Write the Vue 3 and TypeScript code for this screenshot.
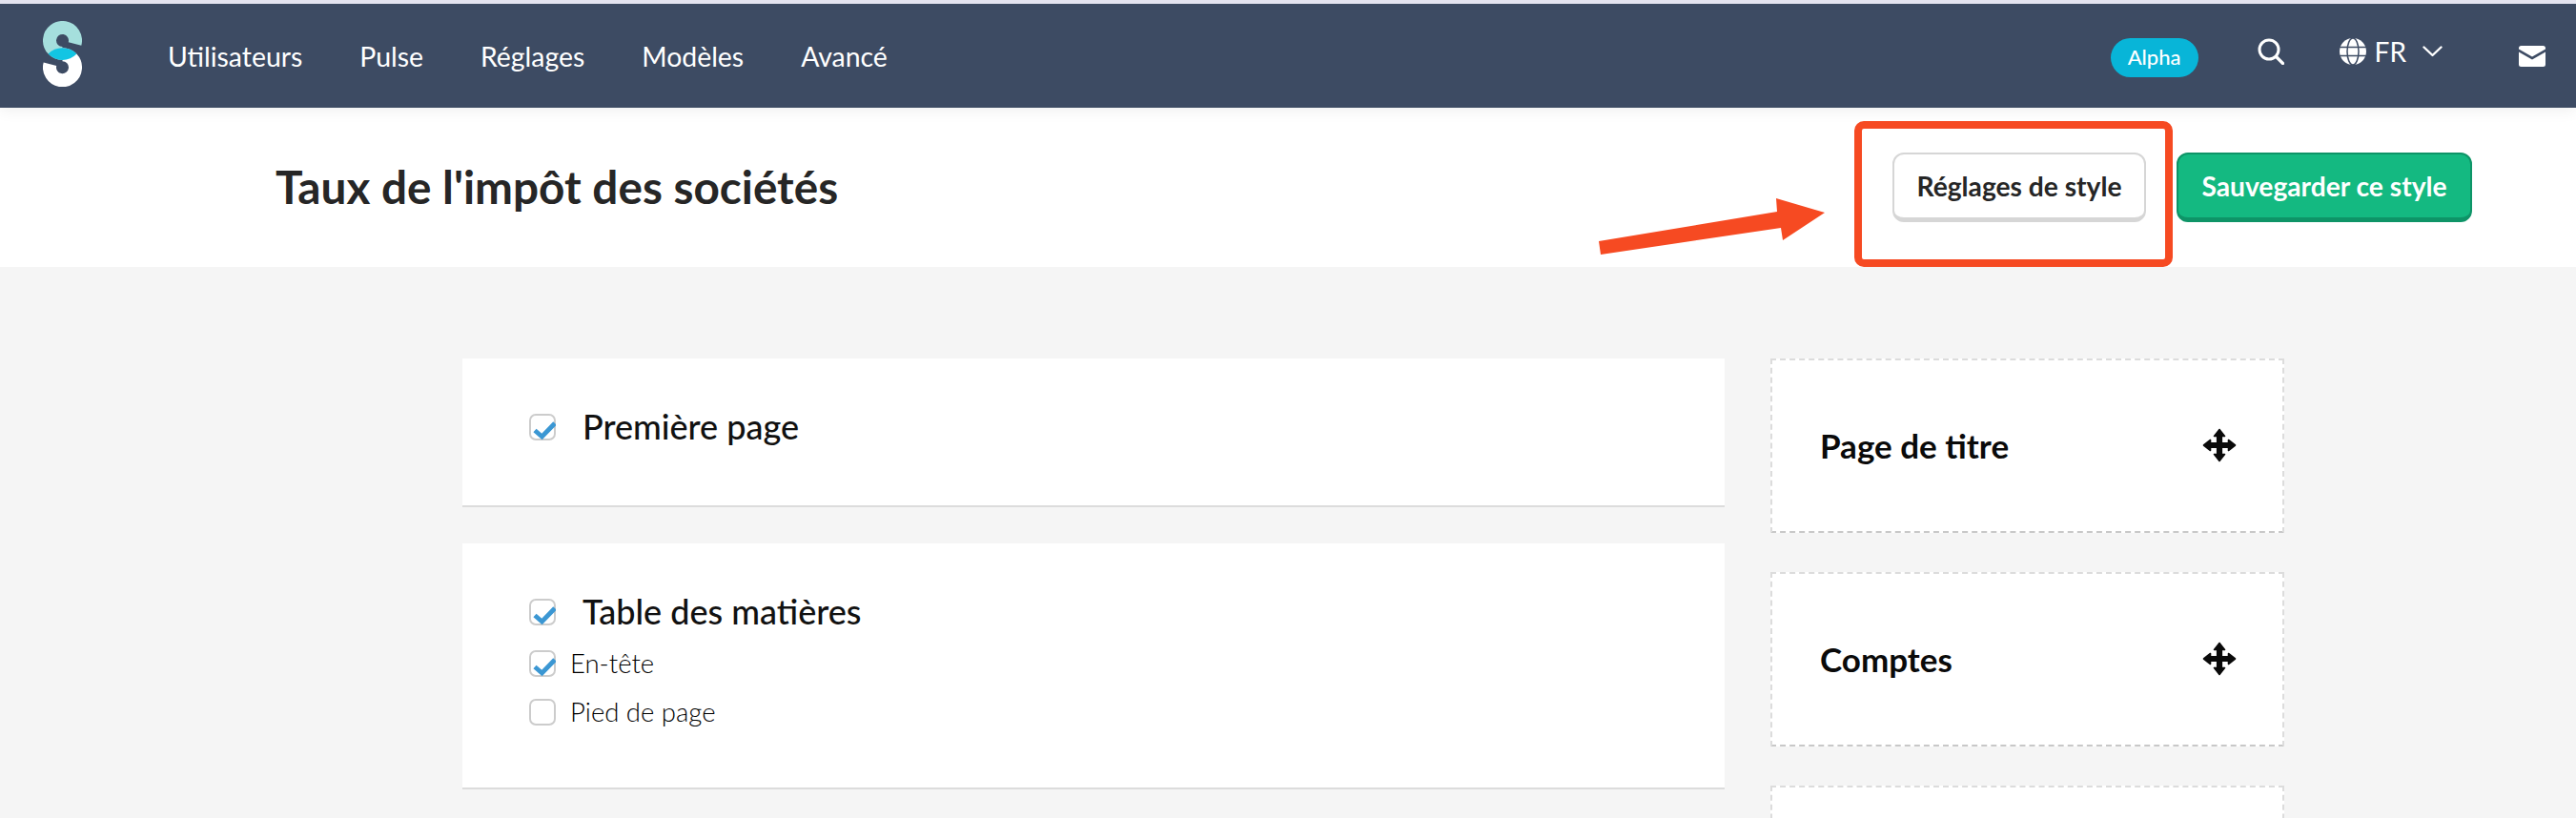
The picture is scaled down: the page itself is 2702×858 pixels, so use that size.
<script setup lang="ts">
interface SubOption {
  label: string
  checked: boolean
}

interface Section {
  title: string
  checked: boolean
  options: SubOption[]
}

const navLinks = ['Utilisateurs', 'Pulse', 'Réglages', 'Modèles', 'Avancé']

const sections: Section[] = [
  { title: 'Première page', checked: true, options: [] },
  {
    title: 'Table des matières',
    checked: true,
    options: [
      { label: 'En-tête', checked: true },
      { label: 'Pied de page', checked: false }
    ]
  }
]

const blocks = ['Page de titre', 'Comptes', '']
</script>

<template>
  <div class="page">
    <nav class="navbar">
      <svg class="logo" viewBox="0 0 41 69" width="41" height="69">
        <path d="M33.54 24A13.5 13.5 0 1 0 20.5 34" fill="none" stroke="#a5dfdd" stroke-width="14" />
        <path d="M7.46 45.2A13.5 13.5 0 1 0 20.5 35.2" fill="none" stroke="#fff" stroke-width="14" />
        <path d="M5.6 34.6A20.5 20.5 0 0 1 35.4 34.6A20.5 20.5 0 0 1 5.6 34.6Z" fill="#12c5e3" />
      </svg>
      <div class="nav-links">
        <a v-for="link in navLinks" :key="link" class="nav-link">{{ link }}</a>
      </div>
      <div class="nav-right">
        <span class="badge">Alpha</span>
        <svg class="icon-search" viewBox="0 0 28 28" width="28" height="28">
          <circle cx="12" cy="12" r="10" fill="none" stroke="#fff" stroke-width="3" />
          <path d="M19.5 19.5L26.5 26.5" stroke="#fff" stroke-width="3.2" stroke-linecap="round" />
        </svg>
        <div class="lang">
          <svg viewBox="0 0 28 28" width="28" height="28">
            <circle cx="14" cy="14" r="14" fill="#fff" />
            <g fill="none" stroke="#3d4b63" stroke-width="1.5">
              <ellipse cx="14" cy="14" rx="6" ry="14" />
              <path d="M0 9.5H28M0 18.5H28" />
            </g>
          </svg>
          <span class="lang-code">FR</span>
          <svg class="chevron" viewBox="0 0 21 12" width="21" height="12">
            <path d="M1.5 1.5L10.5 10L19.5 1.5" fill="none" stroke="#fff" stroke-width="2.4" stroke-linecap="round" stroke-linejoin="round" />
          </svg>
        </div>
        <svg class="icon-mail" viewBox="0 0 28 22" width="28" height="22">
          <path d="M2.5 0H25.5A2.5 2.5 0 0 1 28 2.5V3.5L14 11.5L0 3.5V2.5A2.5 2.5 0 0 1 2.5 0Z" fill="#fff" />
          <path d="M0 6.5L14 14.5L28 6.5V19.5A2.5 2.5 0 0 1 25.5 22H2.5A2.5 2.5 0 0 1 0 19.5Z" fill="#fff" />
        </svg>
      </div>
    </nav>

    <header class="page-header">
      <h1 class="page-title">Taux de l'impôt des sociétés</h1>
      <div class="actions">
        <button type="button" class="btn btn-light">Réglages de style</button>
        <button type="button" class="btn btn-green">Sauvegarder ce style</button>
      </div>
      <!-- annotation drawn on top of the screenshot -->
      <div class="callout-box"></div>
      <svg class="callout-arrow" viewBox="0 0 240 62" width="240" height="62">
        <path d="M1 45L3 59L192 31L194 44L238 15L187 0L188 14Z" fill="#f64a22" />
      </svg>
    </header>

    <main class="content">
      <div class="sections">
        <section v-for="section in sections" :key="section.title" class="card">
          <label class="row">
            <span class="check">
              <svg v-if="section.checked" viewBox="0 0 28 28" width="28" height="28">
                <path d="M6 17.5L13.5 24L27 10" fill="none" stroke="#3b97d3" stroke-width="4.8" />
              </svg>
            </span>
            <span class="row-title">{{ section.title }}</span>
          </label>
          <label v-for="option in section.options" :key="option.label" class="row sub-row">
            <span class="check">
              <svg v-if="option.checked" viewBox="0 0 28 28" width="28" height="28">
                <path d="M6 17.5L13.5 24L27 10" fill="none" stroke="#3b97d3" stroke-width="4.8" />
              </svg>
            </span>
            <span class="row-label">{{ option.label }}</span>
          </label>
        </section>
      </div>

      <aside class="blocks">
        <div v-for="(block, i) in blocks" :key="i" class="block">
          <template v-if="block">
            <span class="block-title">{{ block }}</span>
            <svg viewBox="0 0 36 36" width="36" height="36">
              <path
                d="M18 1.5L23.5 8.5H20.3V15.7H27.5V12.5L34.5 18L27.5 23.5V20.3H20.3V27.5H23.5L18 34.5L12.5 27.5H15.7V20.3H8.5V23.5L1.5 18L8.5 12.5V15.7H15.7V8.5H12.5Z"
                fill="#0a0a0a"
                stroke="#0a0a0a"
                stroke-width="1.6"
                stroke-linejoin="round"
              />
            </svg>
          </template>
        </div>
      </aside>
    </main>
  </div>
</template>

<style scoped>
.page {
  height: 858px;
  overflow: hidden;
  background: #f5f5f5;
  border-top: 4px solid #e4e4f0;
  box-sizing: border-box;
  font-family: Lato, "Open Sans", sans-serif;
}

.navbar {
  display: flex;
  align-items: center;
  height: 109px;
  padding: 0 32px 0 45px;
  background: #3d4b63;
  position: relative;
  z-index: 1;
  box-shadow: 0 4px 14px rgba(0, 0, 0, 0.06);
}

.logo {
  flex: none;
  margin-top: -4px;
}

.nav-links {
  display: flex;
  gap: 60px;
  margin-left: 90px;
}

.nav-link {
  color: #fff;
  font-size: 28.4px;
  line-height: 36px;
}

.nav-right {
  display: flex;
  align-items: center;
  margin-left: auto;
}

.badge {
  width: 92px;
  height: 41px;
  margin-top: 3px;
  border-radius: 21px;
  background: #08b5d8;
  color: #fff;
  font-size: 22px;
  font-weight: 500;
  line-height: 39px;
  text-align: center;
}

.icon-search {
  margin: -10px 0 0 62px;
}

.lang {
  display: flex;
  align-items: center;
  gap: 9px;
  margin: -10px 0 0 58px;
  color: #fff;
}

.lang-code {
  font-size: 28px;
  line-height: 30px;
}

.chevron {
  margin-left: 8px;
}

.icon-mail {
  margin: 0 0 0 80px;
}

.page-header {
  display: flex;
  align-items: center;
  justify-content: space-between;
  height: 167px;
  padding: 0 109px 0 289px;
  background: #fff;
  position: relative;
}

.page-title {
  margin: -2px 0 0;
  color: #262626;
  font-size: 47.7px;
  font-weight: 700;
}

.actions {
  display: flex;
  gap: 32px;
}

.btn {
  height: 73px;
  padding: 0;
  border-radius: 12px;
  font-family: inherit;
  font-size: 28.2px;
  font-weight: 700;
  box-sizing: border-box;
}

.btn-light {
  width: 266px;
  background: #fff;
  border: 2px solid #d6d6d6;
  border-bottom-width: 5px;
  color: #262626;
}

.btn-green {
  width: 310px;
  background: #14b981;
  border: 2px solid #0e9467;
  border-bottom-width: 5px;
  color: #fff;
}

.callout-box {
  position: absolute;
  left: 1945px;
  top: 14px;
  width: 334px;
  height: 153px;
  border: 8px solid #f64a22;
  border-radius: 10px;
  box-sizing: border-box;
}

.callout-arrow {
  position: absolute;
  left: 1676px;
  top: 95px;
}

.content {
  display: flex;
  align-items: flex-start;
  gap: 48px;
  padding: 96px 0 0 485px;
}

.sections {
  display: flex;
  flex-direction: column;
  gap: 38px;
  width: 1324px;
}

.card {
  padding: 58px 70px 68px;
  background: #fff;
  border-bottom: 2px solid #dcdcdc;
}

.row {
  display: flex;
  align-items: center;
  height: 28px;
}

.sub-row {
  margin-top: 23px;
}

.sub-row:nth-child(2) {
  margin-top: 26px;
}

.sub-row:last-child {
  margin-bottom: -3px;
}

.check {
  flex: none;
  width: 28px;
  height: 28px;
  border: 2.5px solid #ccc;
  border-radius: 7px;
  box-sizing: border-box;
  position: relative;
}

.check svg {
  position: absolute;
  left: -2.5px;
  top: -2.5px;
}

.row-title {
  margin: -3px 0 0 28px;
  color: #111;
  font-size: 36px;
  font-weight: 500;
}

.row-label {
  margin: -1px 0 0 15px;
  color: #000;
  font-size: 27.5px;
  font-weight: 300;
}

.blocks {
  display: flex;
  flex-direction: column;
  gap: 41px;
  width: 539px;
}

.block {
  display: flex;
  align-items: center;
  justify-content: space-between;
  flex: none;
  height: 183px;
  padding: 0 48px 2px 50px;
  background: #fff;
  border: 2px dashed #dcdcdc;
  border-bottom-color: #c8c8c8;
  box-sizing: border-box;
}

.block-title {
  color: #0a0a0a;
  font-size: 35px;
  font-weight: 700;
}
</style>

<style>
html,
body {
  margin: 0;
}
</style>
